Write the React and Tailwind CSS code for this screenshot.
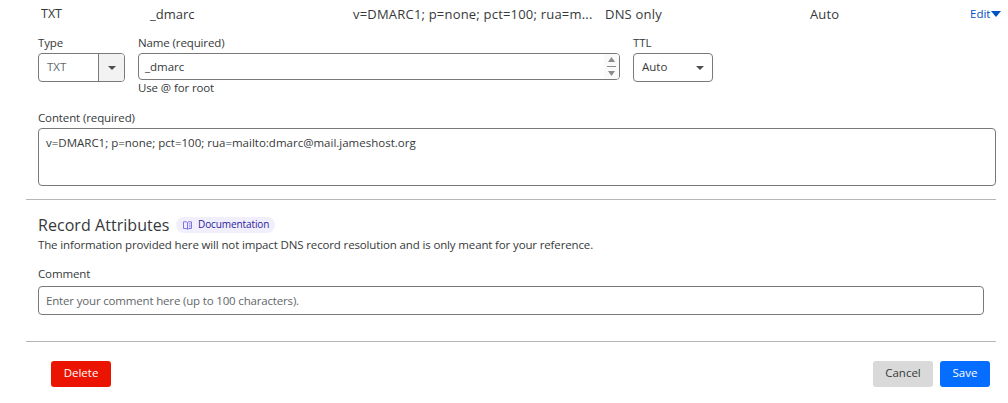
import React from 'react';

function Caret({ className }) {
  return (
    <svg className={className} viewBox="0 0 8 4" preserveAspectRatio="none" fill="currentColor" aria-hidden="true">
      <path d="M0 0H8L4 4Z" />
    </svg>
  );
}

function DocIcon() {
  return (
    <svg className="h-[9px] w-[9px] shrink-0 text-[#7f74e6]" viewBox="0 0 9 9" fill="none" stroke="currentColor" aria-hidden="true">
      <path d="M0.5 0.8H3.3L4.5 1.5L5.7 0.8H8.5V7.5H5.7L4.5 8.3L3.3 7.5H0.5Z" />
      <path d="M4.5 1.5V8" />
      <path d="M6 2.8H7.5M6 4.3H7.5M6 5.8H7.5" strokeWidth="0.8" />
    </svg>
  );
}

function Label({ children, className = '' }) {
  return (
    <span className={`block h-4 whitespace-nowrap text-[11.5px] leading-4 tracking-[-0.12px] text-[#36393a] ${className}`}>{children}</span>
  );
}

function RecordRow() {
  return (
    <div className="flex h-7 items-center whitespace-nowrap pb-px pl-[41px] text-[13px] leading-7 text-[#36393a]">
      <div className="w-[109px] pt-px text-[12.5px]">TXT</div>
      <div className="w-[203px]">_dmarc</div>
      <div className="w-[252px] tracking-[0.2px]">v=DMARC1; p=none; pct=100; rua=m...</div>
      <div className="w-[205px] tracking-[0.2px]">DNS only</div>
      <div className="w-[160px] tracking-[0.1px]">Auto</div>
      <div className="flex items-center pt-px text-[11.5px] text-[#0051c3]">
        Edit
        <Caret className="ml-px h-[6px] w-[10px]" />
      </div>
    </div>
  );
}

function RecordFields() {
  return (
    <div className="flex h-[74px] gap-[13px] pl-[38px] pt-[7px]">
      <div className="w-[87px]">
        <Label>Type</Label>
        <div className="mt-[2px] flex h-[29px] overflow-hidden rounded-[4px] border border-[#797979] text-[11.5px] text-[#62676a]">
          <div className="flex flex-1 items-center pb-px pl-2">TXT</div>
          <div className="flex w-[26px] items-center justify-center border-l border-[#797979] bg-[#f2f2f2] text-[#4e4e4e]">
            <Caret className="h-1 w-2" />
          </div>
        </div>
      </div>
      <div className="w-[482px]">
        <Label>Name (required)</Label>
        <div className="mt-[2px] flex h-[27px] items-center overflow-hidden rounded-[4px] border border-[#797979] pl-[6px] text-[11.5px] text-[#36393a]">
          <span className="flex-1">_dmarc</span>
          <span className="flex h-full w-[15px] flex-col items-center justify-center gap-[4px] bg-[#fafafa] text-[#8b8b8b]">
            <Caret className="h-[5px] w-[7px] rotate-180" />
            <span className="h-px w-[9px] bg-[#8b8b8b]" />
            <Caret className="h-[5px] w-[7px]" />
          </span>
        </div>
        <Label>Use @ for root</Label>
      </div>
      <div className="w-20">
        <Label>TTL</Label>
        <div className="mt-[2px] flex h-[29px] items-center justify-between rounded-[4px] border border-[#797979] pb-px pl-2 pr-2 text-[11.5px] text-[#36393a]">
          Auto
          <Caret className="mt-px h-1 w-2 text-[#4e4e4e]" />
        </div>
      </div>
    </div>
  );
}

export default function App() {
  return (
    <main className="h-[403px] w-[1008px] overflow-hidden bg-white font-['Open_Sans','Noto_Sans',sans-serif]">
      <RecordRow />
      <RecordFields />
      <div className="pl-[38px] pr-3 pt-2">
        <Label>Content (required)</Label>
        <div className="mt-[2px] h-[58px] rounded-[4px] border border-[#797979] px-[7px] pt-[6px] text-[11.5px] leading-4 text-[#36393a]">
          v=DMARC1; p=none; pct=100; rua=mailto:dmarc@mail.jameshost.org
        </div>
      </div>
      <hr className="ml-[26px] mr-3 mt-[13px] border-[#b6b6b6]" />
      <section className="pl-[38px] pt-[13px]">
        <div className="flex h-6 items-center gap-[7px]">
          <h2 className="w-[131px] whitespace-nowrap text-[16px] leading-6 tracking-[0.05px] text-[#36393a]">Record Attributes</h2>
          <span className="flex h-4 w-[99px] items-center gap-[6px] whitespace-nowrap rounded-full bg-[#f1effc] pl-[7px] text-[10px] tracking-[-0.1px] text-[#2c1b9e]">
            <DocIcon />
            <span className="pb-px">Documentation</span>
          </span>
        </div>
        <p className="whitespace-nowrap text-[11.5px] leading-4 tracking-[-0.14px] text-[#36393a]">
          The information provided here will not impact DNS record resolution and is only meant for your reference.
        </p>
        <Label className="mt-[13px]">Comment</Label>
        <div className="mt-1 flex h-[29px] w-[946px] items-center rounded-[4px] border border-[#797979] pl-[7px] text-[11.5px] tracking-[-0.17px] text-[#62676a]">
          Enter your comment here (up to 100 characters).
        </div>
      </section>
      <hr className="ml-[26px] mr-3 mt-[26px] border-[#b6b6b6]" />
      <footer className="flex pl-[51px] pr-[18px] pt-[19px] text-[11.5px]">
        <button className="h-[26px] w-[60px] rounded-[3px] bg-[#eb1400] pb-[2px] text-white">Delete</button>
        <button className="ml-auto h-[26px] w-[60px] rounded-[3px] bg-[#d9d9d9] pb-[2px] text-[#36393a]">Cancel</button>
        <button className="ml-[7px] h-[26px] w-[50px] rounded-[3px] bg-[#056dff] pb-[2px] text-white">Save</button>
      </footer>
    </main>
  );
}
